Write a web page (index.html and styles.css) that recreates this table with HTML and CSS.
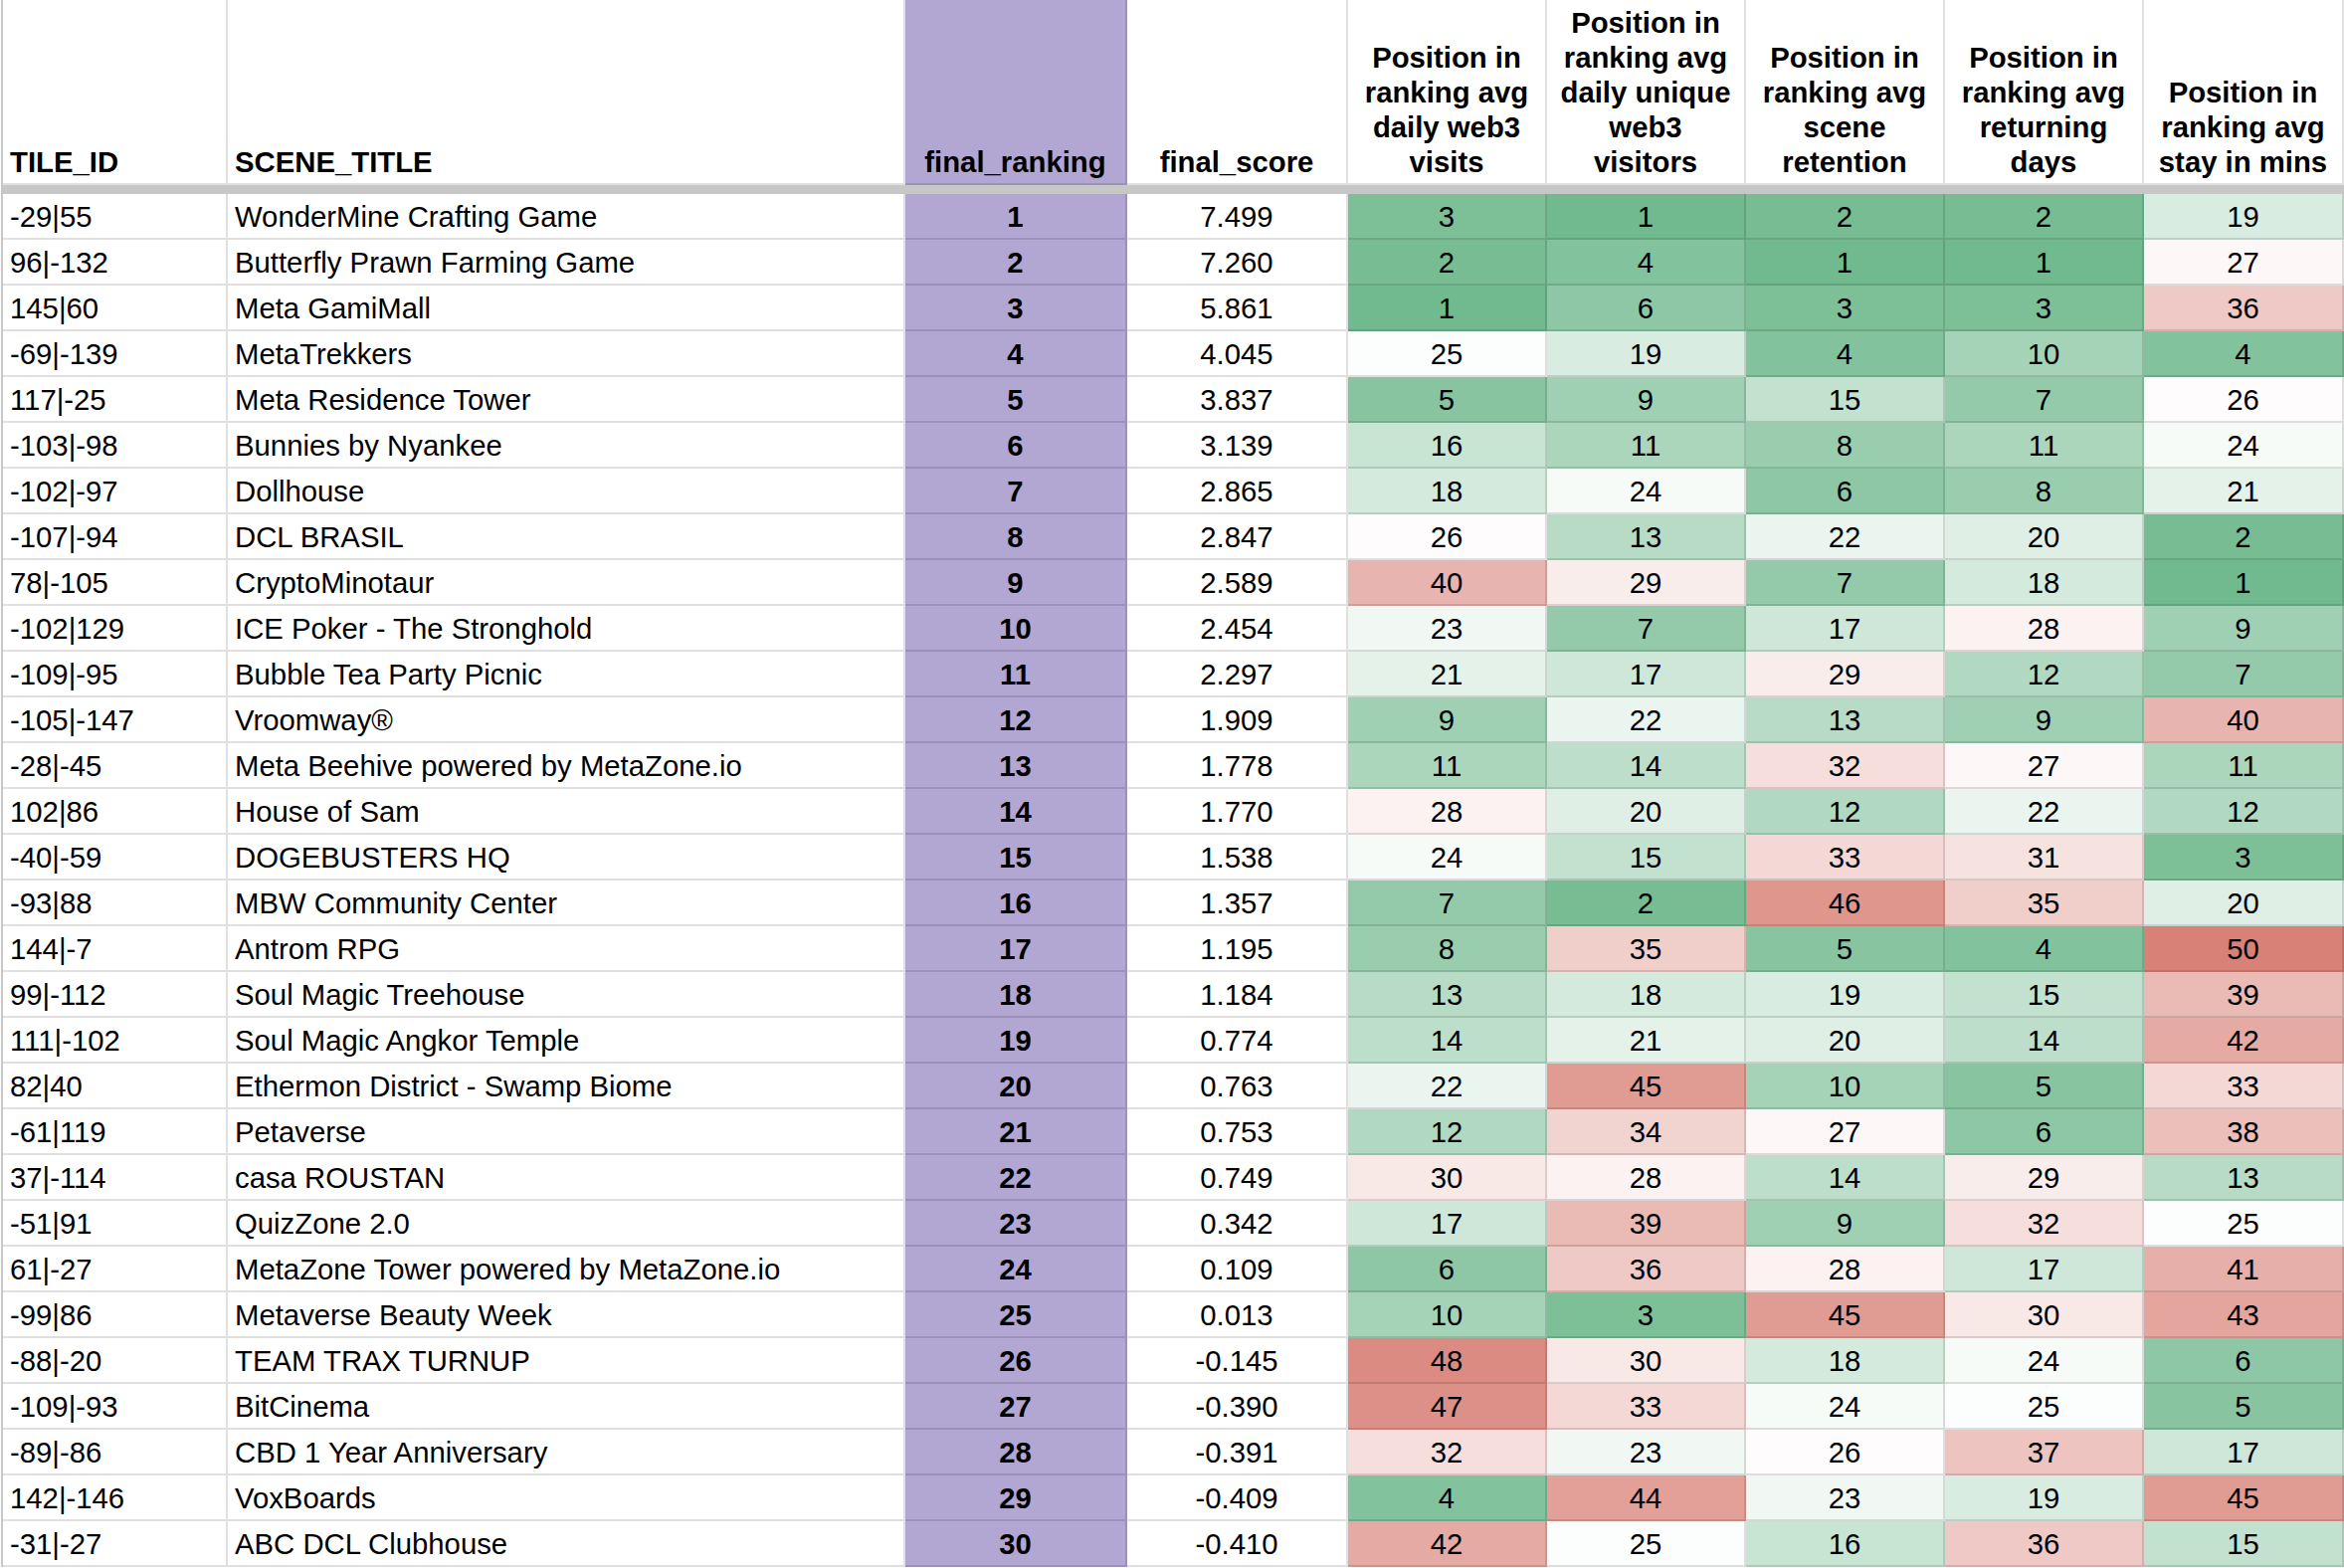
FILE: index.html
```html
<!DOCTYPE html>
<html lang="en">
<head>
<meta charset="utf-8">
<title>Scene ranking</title>
<link rel="stylesheet" href="styles.css">
</head>
<body>
<div class="sheet">
  <div class="hdr">
    <div class="c">TILE_ID</div>
    <div class="c">SCENE_TITLE</div>
    <div class="c ctr rank">final_ranking</div>
    <div class="c ctr">final_score</div>
    <div class="c ctr hh">Position in ranking avg daily web3 visits</div>
    <div class="c ctr hh">Position in ranking avg daily unique web3 visitors</div>
    <div class="c ctr hh">Position in ranking avg scene retention</div>
    <div class="c ctr hh">Position in ranking avg returning days</div>
    <div class="c ctr hh">Position in ranking avg stay in mins</div>
  </div>
  <div class="freeze"></div>
  <div class="rows">
    <div class="row"><div class="c">-29|55</div><div class="c">WonderMine Crafting Game</div><div class="c ctr rank">1</div><div class="c ctr">7.499</div><div class="c ctr heat">3</div><div class="c ctr heat">1</div><div class="c ctr heat">2</div><div class="c ctr heat">2</div><div class="c ctr heat">19</div></div>
    <div class="row"><div class="c">96|-132</div><div class="c">Butterfly Prawn Farming Game</div><div class="c ctr rank">2</div><div class="c ctr">7.260</div><div class="c ctr heat">2</div><div class="c ctr heat">4</div><div class="c ctr heat">1</div><div class="c ctr heat">1</div><div class="c ctr heat">27</div></div>
    <div class="row"><div class="c">145|60</div><div class="c">Meta GamiMall</div><div class="c ctr rank">3</div><div class="c ctr">5.861</div><div class="c ctr heat">1</div><div class="c ctr heat">6</div><div class="c ctr heat">3</div><div class="c ctr heat">3</div><div class="c ctr heat">36</div></div>
    <div class="row"><div class="c">-69|-139</div><div class="c">MetaTrekkers</div><div class="c ctr rank">4</div><div class="c ctr">4.045</div><div class="c ctr heat">25</div><div class="c ctr heat">19</div><div class="c ctr heat">4</div><div class="c ctr heat">10</div><div class="c ctr heat">4</div></div>
    <div class="row"><div class="c">117|-25</div><div class="c">Meta Residence Tower</div><div class="c ctr rank">5</div><div class="c ctr">3.837</div><div class="c ctr heat">5</div><div class="c ctr heat">9</div><div class="c ctr heat">15</div><div class="c ctr heat">7</div><div class="c ctr heat">26</div></div>
    <div class="row"><div class="c">-103|-98</div><div class="c">Bunnies by Nyankee</div><div class="c ctr rank">6</div><div class="c ctr">3.139</div><div class="c ctr heat">16</div><div class="c ctr heat">11</div><div class="c ctr heat">8</div><div class="c ctr heat">11</div><div class="c ctr heat">24</div></div>
    <div class="row"><div class="c">-102|-97</div><div class="c">Dollhouse</div><div class="c ctr rank">7</div><div class="c ctr">2.865</div><div class="c ctr heat">18</div><div class="c ctr heat">24</div><div class="c ctr heat">6</div><div class="c ctr heat">8</div><div class="c ctr heat">21</div></div>
    <div class="row"><div class="c">-107|-94</div><div class="c">DCL BRASIL</div><div class="c ctr rank">8</div><div class="c ctr">2.847</div><div class="c ctr heat">26</div><div class="c ctr heat">13</div><div class="c ctr heat">22</div><div class="c ctr heat">20</div><div class="c ctr heat">2</div></div>
    <div class="row"><div class="c">78|-105</div><div class="c">CryptoMinotaur</div><div class="c ctr rank">9</div><div class="c ctr">2.589</div><div class="c ctr heat">40</div><div class="c ctr heat">29</div><div class="c ctr heat">7</div><div class="c ctr heat">18</div><div class="c ctr heat">1</div></div>
    <div class="row"><div class="c">-102|129</div><div class="c">ICE Poker - The Stronghold</div><div class="c ctr rank">10</div><div class="c ctr">2.454</div><div class="c ctr heat">23</div><div class="c ctr heat">7</div><div class="c ctr heat">17</div><div class="c ctr heat">28</div><div class="c ctr heat">9</div></div>
    <div class="row"><div class="c">-109|-95</div><div class="c">Bubble Tea Party Picnic</div><div class="c ctr rank">11</div><div class="c ctr">2.297</div><div class="c ctr heat">21</div><div class="c ctr heat">17</div><div class="c ctr heat">29</div><div class="c ctr heat">12</div><div class="c ctr heat">7</div></div>
    <div class="row"><div class="c">-105|-147</div><div class="c">Vroomway®</div><div class="c ctr rank">12</div><div class="c ctr">1.909</div><div class="c ctr heat">9</div><div class="c ctr heat">22</div><div class="c ctr heat">13</div><div class="c ctr heat">9</div><div class="c ctr heat">40</div></div>
    <div class="row"><div class="c">-28|-45</div><div class="c">Meta Beehive powered by MetaZone.io</div><div class="c ctr rank">13</div><div class="c ctr">1.778</div><div class="c ctr heat">11</div><div class="c ctr heat">14</div><div class="c ctr heat">32</div><div class="c ctr heat">27</div><div class="c ctr heat">11</div></div>
    <div class="row"><div class="c">102|86</div><div class="c">House of Sam</div><div class="c ctr rank">14</div><div class="c ctr">1.770</div><div class="c ctr heat">28</div><div class="c ctr heat">20</div><div class="c ctr heat">12</div><div class="c ctr heat">22</div><div class="c ctr heat">12</div></div>
    <div class="row"><div class="c">-40|-59</div><div class="c">DOGEBUSTERS HQ</div><div class="c ctr rank">15</div><div class="c ctr">1.538</div><div class="c ctr heat">24</div><div class="c ctr heat">15</div><div class="c ctr heat">33</div><div class="c ctr heat">31</div><div class="c ctr heat">3</div></div>
    <div class="row"><div class="c">-93|88</div><div class="c">MBW Community Center</div><div class="c ctr rank">16</div><div class="c ctr">1.357</div><div class="c ctr heat">7</div><div class="c ctr heat">2</div><div class="c ctr heat">46</div><div class="c ctr heat">35</div><div class="c ctr heat">20</div></div>
    <div class="row"><div class="c">144|-7</div><div class="c">Antrom RPG</div><div class="c ctr rank">17</div><div class="c ctr">1.195</div><div class="c ctr heat">8</div><div class="c ctr heat">35</div><div class="c ctr heat">5</div><div class="c ctr heat">4</div><div class="c ctr heat">50</div></div>
    <div class="row"><div class="c">99|-112</div><div class="c">Soul Magic Treehouse</div><div class="c ctr rank">18</div><div class="c ctr">1.184</div><div class="c ctr heat">13</div><div class="c ctr heat">18</div><div class="c ctr heat">19</div><div class="c ctr heat">15</div><div class="c ctr heat">39</div></div>
    <div class="row"><div class="c">111|-102</div><div class="c">Soul Magic Angkor Temple</div><div class="c ctr rank">19</div><div class="c ctr">0.774</div><div class="c ctr heat">14</div><div class="c ctr heat">21</div><div class="c ctr heat">20</div><div class="c ctr heat">14</div><div class="c ctr heat">42</div></div>
    <div class="row"><div class="c">82|40</div><div class="c">Ethermon District - Swamp Biome</div><div class="c ctr rank">20</div><div class="c ctr">0.763</div><div class="c ctr heat">22</div><div class="c ctr heat">45</div><div class="c ctr heat">10</div><div class="c ctr heat">5</div><div class="c ctr heat">33</div></div>
    <div class="row"><div class="c">-61|119</div><div class="c">Petaverse</div><div class="c ctr rank">21</div><div class="c ctr">0.753</div><div class="c ctr heat">12</div><div class="c ctr heat">34</div><div class="c ctr heat">27</div><div class="c ctr heat">6</div><div class="c ctr heat">38</div></div>
    <div class="row"><div class="c">37|-114</div><div class="c">casa ROUSTAN</div><div class="c ctr rank">22</div><div class="c ctr">0.749</div><div class="c ctr heat">30</div><div class="c ctr heat">28</div><div class="c ctr heat">14</div><div class="c ctr heat">29</div><div class="c ctr heat">13</div></div>
    <div class="row"><div class="c">-51|91</div><div class="c">QuizZone 2.0</div><div class="c ctr rank">23</div><div class="c ctr">0.342</div><div class="c ctr heat">17</div><div class="c ctr heat">39</div><div class="c ctr heat">9</div><div class="c ctr heat">32</div><div class="c ctr heat">25</div></div>
    <div class="row"><div class="c">61|-27</div><div class="c">MetaZone Tower powered by MetaZone.io</div><div class="c ctr rank">24</div><div class="c ctr">0.109</div><div class="c ctr heat">6</div><div class="c ctr heat">36</div><div class="c ctr heat">28</div><div class="c ctr heat">17</div><div class="c ctr heat">41</div></div>
    <div class="row"><div class="c">-99|86</div><div class="c">Metaverse Beauty Week</div><div class="c ctr rank">25</div><div class="c ctr">0.013</div><div class="c ctr heat">10</div><div class="c ctr heat">3</div><div class="c ctr heat">45</div><div class="c ctr heat">30</div><div class="c ctr heat">43</div></div>
    <div class="row"><div class="c">-88|-20</div><div class="c">TEAM TRAX TURNUP</div><div class="c ctr rank">26</div><div class="c ctr">-0.145</div><div class="c ctr heat">48</div><div class="c ctr heat">30</div><div class="c ctr heat">18</div><div class="c ctr heat">24</div><div class="c ctr heat">6</div></div>
    <div class="row"><div class="c">-109|-93</div><div class="c">BitCinema</div><div class="c ctr rank">27</div><div class="c ctr">-0.390</div><div class="c ctr heat">47</div><div class="c ctr heat">33</div><div class="c ctr heat">24</div><div class="c ctr heat">25</div><div class="c ctr heat">5</div></div>
    <div class="row"><div class="c">-89|-86</div><div class="c">CBD 1 Year Anniversary</div><div class="c ctr rank">28</div><div class="c ctr">-0.391</div><div class="c ctr heat">32</div><div class="c ctr heat">23</div><div class="c ctr heat">26</div><div class="c ctr heat">37</div><div class="c ctr heat">17</div></div>
    <div class="row"><div class="c">142|-146</div><div class="c">VoxBoards</div><div class="c ctr rank">29</div><div class="c ctr">-0.409</div><div class="c ctr heat">4</div><div class="c ctr heat">44</div><div class="c ctr heat">23</div><div class="c ctr heat">19</div><div class="c ctr heat">45</div></div>
    <div class="row"><div class="c">-31|-27</div><div class="c">ABC DCL Clubhouse</div><div class="c ctr rank">30</div><div class="c ctr">-0.410</div><div class="c ctr heat">42</div><div class="c ctr heat">25</div><div class="c ctr heat">16</div><div class="c ctr heat">36</div><div class="c ctr heat">15</div></div>
  </div>
</div>
<script src="script.js"></script>
</body>
</html>
```

FILE: styles.css
```css
* {
  box-sizing: border-box;
}

html,
body {
  margin: 0;
  padding: 0;
  background: #ffffff;
}

body {
  overflow: hidden;
  font-family: "Liberation Sans", Arial, sans-serif;
  color: #000000;
}

.sheet {
  margin-left: 1px;
  width: 2355px;
  border-left: 2px solid #c7c7c7;
}

.hdr,
.row {
  display: grid;
  grid-template-columns: 226px 681px 223px 222px 200px 200px 200px 200px 201px;
}

.hdr {
  height: 186px;
}

.hdr .c {
  display: flex;
  align-items: flex-end;
  padding: 0 6px 4px 7px;
  font-weight: bold;
  font-size: 29.3px;
  line-height: 35px;
  border-right: 2px solid rgba(0, 0, 0, 0.12);
  border-bottom: 2px solid rgba(0, 0, 0, 0.12);
}

.freeze {
  height: 9px;
  background: #c7c7c7;
}

.row {
  height: 46px;
}

.row .c {
  display: flex;
  align-items: center;
  padding: 1px 6px 0 7px;
  font-size: 29.3px;
  line-height: 35px;
  white-space: nowrap;
  overflow: hidden;
  border-right: 2px solid rgba(0, 0, 0, 0.12);
  border-bottom: 2px solid rgba(0, 0, 0, 0.12);
}

.ctr {
  justify-content: center;
  text-align: center;
}

.hdr .ctr,
.row .ctr {
  padding-left: 6px;
  padding-right: 6px;
}

.hdr .hh {
  padding-left: 9px;
  padding-right: 9px;
}

.rank {
  background: #b2a7d3;
}

.row .rank {
  font-weight: bold;
}

.heat {
  background: #ffffff;
}
```

FILE: script.js
```js
(function () {
  var green = [113, 185, 142];
  var white = [255, 255, 255];
  var red = [216, 129, 119];
  var minV = 1, midV = 25.5, maxV = 50;

  function mix(a, b, t) {
    return [0, 1, 2].map(function (i) {
      return Math.round(a[i] + (b[i] - a[i]) * t);
    });
  }

  function colorFor(v) {
    var c;
    if (v <= midV) {
      c = mix(green, white, Math.max(0, (v - minV) / (midV - minV)));
    } else {
      c = mix(white, red, Math.min(1, (v - midV) / (maxV - midV)));
    }
    return "rgb(" + c.join(",") + ")";
  }

  var cells = document.querySelectorAll(".heat");
  for (var i = 0; i < cells.length; i++) {
    var v = parseFloat(cells[i].textContent);
    cells[i].style.backgroundColor = colorFor(v);
  }
})();
```
